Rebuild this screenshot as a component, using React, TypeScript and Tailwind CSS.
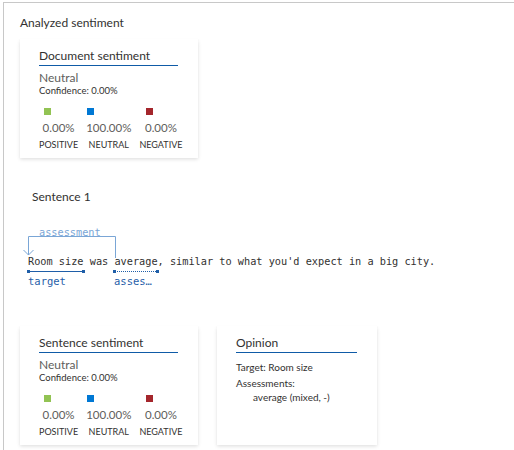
import React from "react";

const font = { fontFamily: "Lato, 'Noto Sans', sans-serif" };
const mono = { fontFamily: "'DejaVu Sans Mono', 'Liberation Mono', monospace" };

type Score = { color: string; value: string; label: string };

const scores: Score[] = [
  { color: "bg-[#92c353]", value: "0.00%", label: "POSITIVE" },
  { color: "bg-[#0078d4]", value: "100.00%", label: "NEUTRAL" },
  { color: "bg-[#a4262c]", value: "0.00%", label: "NEGATIVE" },
];

function Card({ title, width, children }: { title: string; width: string; children: React.ReactNode }) {
  return (
    <div
      className={`${width} h-[119px] shrink-0 bg-white pl-[19px] pr-[20px] pt-[9px] shadow-[0_1.6px_3.6px_rgba(0,0,0,0.13),0_0.3px_0.9px_rgba(0,0,0,0.11)]`}
    >
      <div className="border-b border-[#0f5ba7] text-[12px] leading-[16px] pb-[1px] text-[#323130]">{title}</div>
      {children}
    </div>
  );
}

function SentimentCard({ title }: { title: string }) {
  return (
    <Card title={title} width="w-[178px]">
      <div className="mt-[5px] text-[12px] leading-[14px] text-[#605e5c]">Neutral</div>
      <div className="text-[9.5px] leading-[12px] text-[#323130]">Confidence: 0.00%</div>
      <div className="mt-[11px] flex gap-2">
        {scores.map((s) => (
          <div key={s.label} className="flex flex-col items-center">
            <div className="flex flex-col">
              <span className={`w-[7px] h-[7px] ml-[1px] ${s.color}`} />
              <span className="mt-[6px] text-[11.5px] leading-[14px] text-[#605e5c]">{s.value}</span>
            </div>
            <span className="mt-[4px] text-[9px] leading-[12px] text-[#323130]">{s.label}</span>
          </div>
        ))}
      </div>
    </Card>
  );
}

function Annotated() {
  return (
    <div className="relative ml-[8px] mt-[20px] text-[10.25px]" style={mono}>
      <div className="h-[14px] pl-[11px] leading-[14px] text-[#7aa6d6]">assessment</div>
      {/* connector from the assessment word back to its target */}
      <svg className="absolute left-0 top-[11px] overflow-visible" width="90" height="22" viewBox="0 0 90 22">
        <path d="M0.5 19 V0.5 H87.5 V22" fill="none" stroke="#7aa6d6" strokeWidth="1" />
        <path d="M-4.5 14 L0.5 19 L5.5 14" fill="none" stroke="#7aa6d6" strokeWidth="1" />
      </svg>
      <div className="mt-[15px] leading-[14px] text-[#323130] whitespace-pre">
        Room size was average, similar to what you'd expect in a big city.
      </div>
      <div className="flex mt-[2px] h-[3px] items-center">
        <span className="relative w-[9ch] border-t border-[#1f5ea8]">
          <span className="absolute -left-[1px] -top-[2px] w-[3px] h-[3px] bg-[#1f5ea8]" />
          <span className="absolute -right-[1px] -top-[2px] w-[3px] h-[3px] bg-[#1f5ea8]" />
        </span>
        <span className="relative ml-[5ch] w-[7ch] border-t border-dotted border-[#1f5ea8]">
          <span className="absolute -left-[1px] -top-[2px] w-[3px] h-[3px] bg-[#1f5ea8]" />
          <span className="absolute -right-[1px] -top-[2px] w-[3px] h-[3px] bg-[#1f5ea8]" />
        </span>
      </div>
      <div className="flex mt-[1px] text-[10.5px] leading-[14px] text-[#1f5ea8]">
        <span className="w-[86px]">target</span>
        <span>asses…</span>
      </div>
    </div>
  );
}

export default function App() {
  return (
    <div className="bg-white min-h-[450px] overflow-hidden" style={font}>
      <div className="ml-[3px] mt-[2px] h-[448px] border-l border-t border-[#c8c8c8] pl-[16px] pt-[12px]">
        <div className="text-[12px] leading-[16px] text-[#323130]">Analyzed sentiment</div>
        <div className="mt-[8px]">
          <SentimentCard title="Document sentiment" />
        </div>

        <div className="mt-[31px] ml-[12px] text-[12px] leading-[16px] text-[#323130]">Sentence 1</div>
        <Annotated />

        <div className="mt-[38px] flex gap-[19px]">
          <SentimentCard title="Sentence sentiment" />
          <Card title="Opinion" width="w-[160px]">
            <div className="mt-[8px] text-[10px] leading-[12px] text-[#323130]">Target: Room size</div>
            <div className="mt-[4px] text-[10px] leading-[12px] text-[#323130]">Assessments:</div>
            <div className="ml-[17px] mt-[2px] text-[10px] leading-[12px] text-[#323130]">average (mixed, -)</div>
          </Card>
        </div>
      </div>
    </div>
  );
}
